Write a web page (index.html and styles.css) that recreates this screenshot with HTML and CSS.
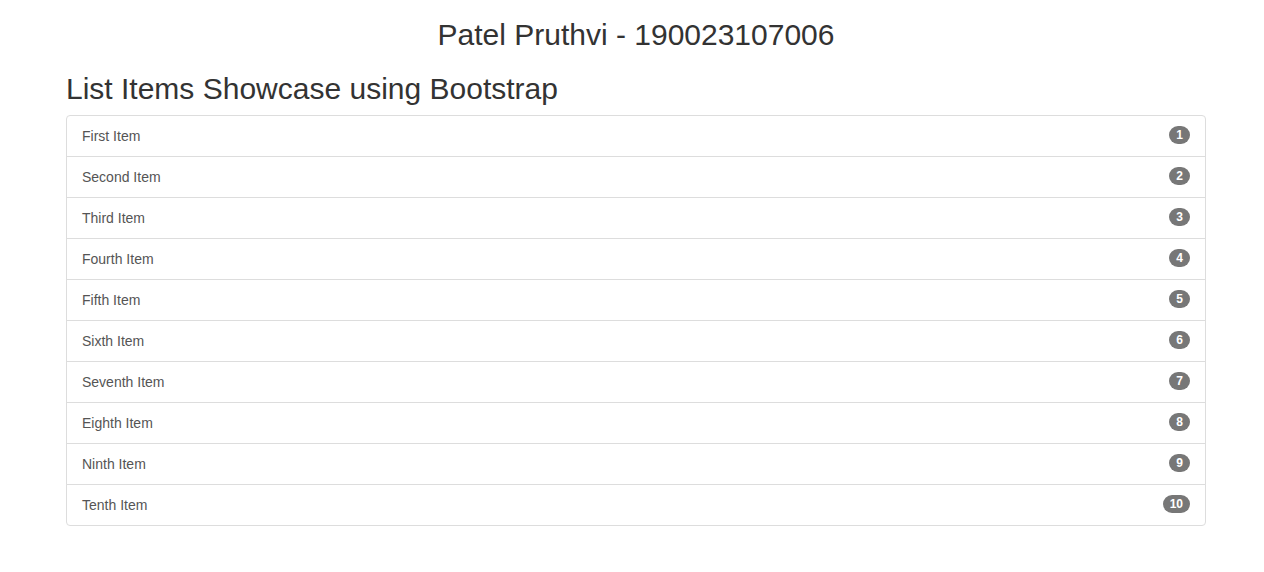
FILE: index.html
```html
<!DOCTYPE html>
<html>
<head>
<meta charset="utf-8">
<title>List Items Showcase</title>
<link rel="stylesheet" href="styles.css">
</head>
<body>
<div class="container">
  <h2 class="title">Patel Pruthvi - 190023107006</h2>
  <h2 class="heading">List Items Showcase using Bootstrap</h2>
  <ul class="list-group">
    <li class="list-group-item"><span>First Item</span><span class="badge">1</span></li>
    <li class="list-group-item"><span>Second Item</span><span class="badge">2</span></li>
    <li class="list-group-item"><span>Third Item</span><span class="badge">3</span></li>
    <li class="list-group-item"><span>Fourth Item</span><span class="badge">4</span></li>
    <li class="list-group-item"><span>Fifth Item</span><span class="badge">5</span></li>
    <li class="list-group-item"><span>Sixth Item</span><span class="badge">6</span></li>
    <li class="list-group-item"><span>Seventh Item</span><span class="badge">7</span></li>
    <li class="list-group-item"><span>Eighth Item</span><span class="badge">8</span></li>
    <li class="list-group-item"><span>Ninth Item</span><span class="badge">9</span></li>
    <li class="list-group-item"><span>Tenth Item</span><span class="badge">10</span></li>
  </ul>
</div>
</body>
</html>
```
FILE: styles.css
```css
*, *::before, *::after {
  box-sizing: border-box;
}
html, body {
  margin: 0;
  padding: 0;
  background: #fff;
}
body {
  font-family: "Liberation Sans", Arial, Helvetica, sans-serif;
  font-size: 14px;
  line-height: 1.42857143;
  color: #333;
}
.container {
  width: 1140px;
  margin-left: 66px;
}
.title, .heading {
  font-size: 30px;
  font-weight: 500;
  line-height: 1.1;
  color: #333;
}
.title {
  margin: 18px 0 0;
  text-align: center;
}
.heading {
  margin: 21px 0 10px;
}
.list-group {
  list-style: none;
  margin: 0 0 20px;
  padding: 0;
}
.list-group-item {
  display: flex;
  justify-content: space-between;
  align-items: center;
  padding: 10px 15px;
  margin-bottom: -1px;
  border: 1px solid #ddd;
  background: #fff;
  color: #555;
  line-height: 20px;
}
.list-group-item:first-child {
  border-top-left-radius: 4px;
  border-top-right-radius: 4px;
}
.list-group-item:last-child {
  margin-bottom: 0;
  border-bottom-left-radius: 4px;
  border-bottom-right-radius: 4px;
}
.badge {
  display: inline-block;
  min-width: 10px;
  padding: 3px 7px;
  margin-bottom: 2px;
  font-size: 12px;
  font-weight: bold;
  line-height: 1;
  color: #fff;
  text-align: center;
  white-space: nowrap;
  background-color: #777;
  border-radius: 10px;
}
```
